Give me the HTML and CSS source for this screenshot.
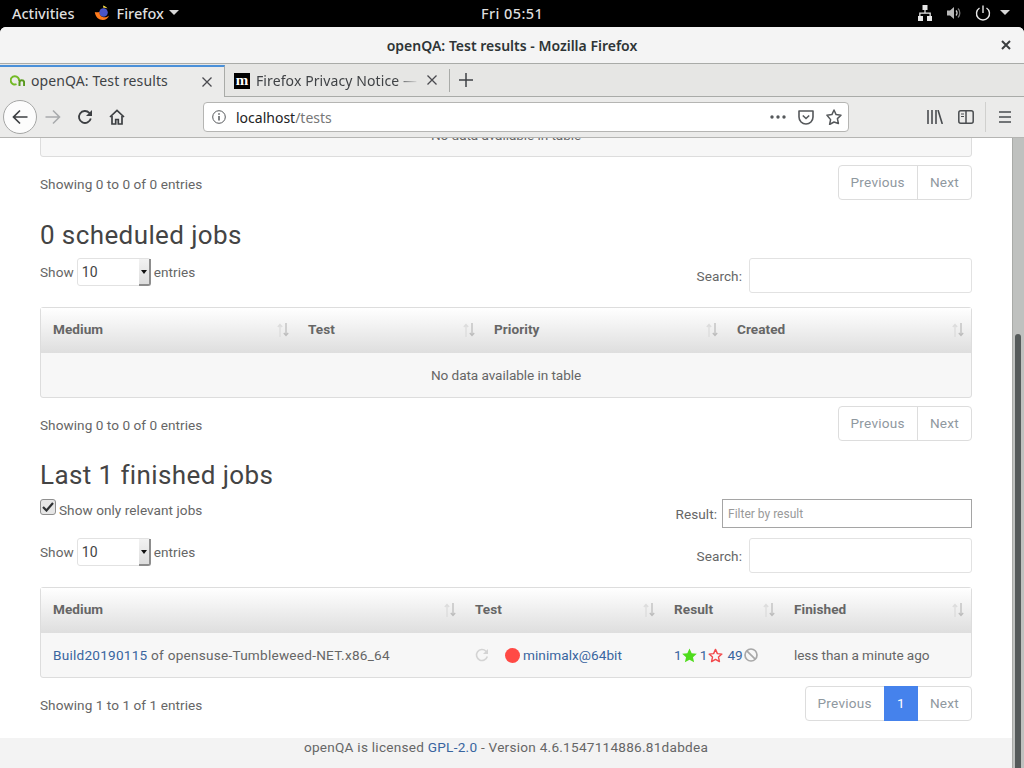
FILE: index.html
```html
<!DOCTYPE html>
<html>

<head>
    <title>openQA: Test results</title>
    <link rel="stylesheet" href="styles.css">
</head>

<body>
    <svg class="icon-defs">
        <symbol id="sort" viewBox="0 0 12 14">
            <path d="M3 14V2M.8 4L3 1.500 5.200 4" fill="none" stroke="#dcdcdc" stroke-width="1.300"/>
            <path d="M9 0v12M6.800 10L9 12.500 11.200 10" fill="none" stroke="#bdbdbd" stroke-width="1.300"/>
        </symbol>
        <symbol id="close" viewBox="0 0 10 10">
            <path d="M.5.500l9 9M9.500.500l-9 9" stroke="#4a4a4f" stroke-width="1.300"/>
        </symbol>
        <linearGradient id="fx-grad" x1="1" y1="0" x2="0" y2="1">
            <stop offset="0" stop-color="#ffd02e"/>
            <stop offset=".5" stop-color="#ff8a1c"/>
            <stop offset="1" stop-color="#e9265a"/>
        </linearGradient>
    </svg>

    <div class="topbar">
        <div class="top-left">
            <span class="activities">Activities</span>
            <span class="app-menu">
                <svg class="fx-logo" width="17" height="18" viewBox="0 0 17 18">
                    <circle cx="8.500" cy="9.500" r="8" fill="url(#fx-grad)"/>
                    <circle cx="9.500" cy="8.500" r="4.300" fill="#4a55c8"/>
                    <path d="M.8 8c.5 5 4 8 8 8 3 0 5.500-2 6.300-4.500-1.500 1.500-3.500 2.200-5.600 1.700C6.500 12.500 5 10.500 5.500 8 4 8.300 2 8.300.8 8z" fill="#ff7a1c"/>
                    <path d="M9 1.500c2 .5 3.500 1.500 4.500 3-1-.5-2.500-1-4-.5z" fill="#ffe14d"/>
                </svg>
                Firefox
                <span class="caret"></span>
            </span>
        </div>
        <div class="clock">Fri 05:51</div>
        <div class="top-right">
            <svg width="16" height="16" viewBox="0 0 16 16" fill="#e6e6e6"><path d="M5.500 0h5v5H8.600v2.400h5.200V11H15v5h-5v-5h2.500V8.700h-9V11H6v5H1v-5h1.200V7.400h5.200V5H5.500z"/></svg>
            <svg width="16" height="16" viewBox="0 0 16 16" fill="none"><path d="M1 5.500h3L8 2v12L4 10.500H1z" fill="#b8b8b8"/><path d="M10 5.500a3.500 3.500 0 0 1 0 5" stroke="#d0d0d0" stroke-width="1.300"/><path d="M12 3.500a6.500 6.500 0 0 1 0 9" stroke="#7a7a7a" stroke-width="1.300"/></svg>
            <svg width="16" height="16" viewBox="0 0 16 16" fill="none" stroke="#e6e6e6" stroke-width="1.400"><path d="M4.500 3a6.500 6.500 0 1 0 7 0"/><path d="M8 .5v7.500"/></svg>
            <span class="caret"></span>
        </div>
    </div>

    <div class="window">
        <div class="titlebar">
            <span>openQA: Test results - Mozilla Firefox</span>
            <svg class="win-close" width="10" height="10" viewBox="0 0 10 10" stroke="#3a3d3f" stroke-width="2"><path d="M1 1l8 8M9 1l-8 8"/></svg>
        </div>

        <div class="tabbar">
            <div class="tab tab-active">
                <svg class="favicon" width="15" height="16" viewBox="0 0 15 16" fill="none" stroke="#73ba25" stroke-width="2"><path d="M6.500 11.200A4.200 4.200 0 1 1 9 8"/><path d="M9.500 13V9.500a2.300 2.300 0 0 1 4.600 0V13" stroke="#5a9a1f"/></svg>
                <span class="tab-title">openQA: Test results</span>
                <svg class="tab-close" width="10" height="10"><use href="#close"/></svg>
            </div>
            <div class="tab tab-other">
                <span class="moz-icon">m</span>
                <span class="tab-title">Firefox Privacy Notice —</span>
                <svg class="tab-close" width="10" height="10"><use href="#close"/></svg>
            </div>
            <svg class="new-tab" width="14" height="14" viewBox="0 0 14 14" stroke="#3f4145" stroke-width="1.500"><path d="M7 0v14M0 7h14"/></svg>
        </div>

        <div class="navbar">
            <div class="back-btn">
                <svg width="16" height="16" viewBox="0 0 16 16" fill="none" stroke="#3c3f42" stroke-width="1.700"><path d="M15.500 8H1.500M8 1.500L1.500 8 8 14.500"/></svg>
            </div>
            <svg class="nav-forward" width="16" height="16" viewBox="0 0 16 16" fill="none" stroke="#a9abad" stroke-width="1.600"><path d="M.5 8h14M8 1.500L14.500 8 8 14.500"/></svg>
            <svg class="nav-reload" width="16" height="16" viewBox="0 0 16 16" fill="none" stroke="#3c3f42" stroke-width="1.800"><path d="M13.800 9.500A6 6 0 1 1 12.300 3.800L14 6"/><path d="M15 1v6H9z" fill="#3c3f42" stroke="none"/></svg>
            <svg class="nav-home" width="16" height="16" viewBox="0 0 16 16" fill="none" stroke="#3c3f42" stroke-width="1.700"><path d="M1 8l7-6.500L15 8"/><path d="M3 7v8h3.700v-4.500h2.600V15H13V7"/></svg>
            <div class="urlbar">
                <svg class="url-info" width="14" height="14" viewBox="0 0 14 14" fill="none" stroke="#55585b"><circle cx="7" cy="7" r="6.300"/><path d="M7 6v4.500" stroke-width="1.500"/><path d="M7 3.200v1.500" stroke-width="1.500"/></svg>
                <span class="url-text">localhost<span class="url-path">/tests</span></span>
                <svg class="url-dots" width="16" height="4" viewBox="0 0 16 4" fill="#55585b"><circle cx="2" cy="2" r="1.700"/><circle cx="8" cy="2" r="1.700"/><circle cx="14" cy="2" r="1.700"/></svg>
                <svg class="url-pocket" width="16" height="15" viewBox="0 0 16 15" fill="none" stroke="#55585b" stroke-width="1.600"><path d="M1 1h14v6a7 7 0 0 1-14 0z" stroke-linejoin="round"/><path d="M4.800 5.500L8 8.500l3.200-3"/></svg>
                <svg class="url-star" width="16" height="16" viewBox="0 0 16 16" fill="none" stroke="#55585b" stroke-width="1.500" stroke-linejoin="round"><path d="M8 1l2.100 4.600 4.900.6-3.600 3.400 1 4.900L8 13l-4.400 2.500 1-4.900L1 6.200l4.900-.6z"/></svg>
            </div>
            <div class="nav-right">
                <svg width="16" height="14" viewBox="0 0 16 14" stroke="#4a4d50" stroke-width="1.600"><path d="M1 0v14M5 0v14M9 0v14M11 0l4.300 14"/></svg>
                <svg class="nav-sidebar" width="16" height="14" viewBox="0 0 16 14" fill="none" stroke="#4a4d50" stroke-width="1.500"><rect x=".8" y=".8" width="14.400" height="12.400" rx="2"/><path d="M8 1v12"/><path d="M3 4h3M3 6.500h3" stroke-width="1.200"/></svg>
                <span class="nav-sep"></span>
                <svg width="12" height="12" viewBox="0 0 12 12" stroke="#4a4d50" stroke-width="1.600"><path d="M0 1h12M0 6h12M0 11h12"/></svg>
            </div>
        </div>

        <div class="viewport">
            <div class="content">
                <div class="page">
                    <div class="clipped-panel">No data available in table</div>
                    <div class="table-footer">
                        <span>Showing 0 to 0 of 0 entries</span>
                        <div class="pager">
                            <span class="page-btn">Previous</span>
                            <span class="page-btn">Next</span>
                        </div>
                    </div>

                    <h2>0 scheduled jobs</h2>
                    <div class="table-controls">
                        <div class="show-entries">
                            Show
                            <span class="fake-select"><span>10</span><span class="select-arrow"></span></span>
                            entries
                        </div>
                        <label class="search-box">Search: <input type="text"></label>
                    </div>
                    <table class="jobs-table">
                        <thead>
                            <tr>
                                <th class="col-a">Medium<svg class="sort" width="12" height="14"><use href="#sort"/></svg></th>
                                <th class="col-b">Test<svg class="sort" width="12" height="14"><use href="#sort"/></svg></th>
                                <th class="col-c">Priority<svg class="sort" width="12" height="14"><use href="#sort"/></svg></th>
                                <th>Created<svg class="sort" width="12" height="14"><use href="#sort"/></svg></th>
                            </tr>
                        </thead>
                        <tbody>
                            <tr><td colspan="4" class="empty-cell">No data available in table</td></tr>
                        </tbody>
                    </table>
                    <div class="table-footer">
                        <span>Showing 0 to 0 of 0 entries</span>
                        <div class="pager">
                            <span class="page-btn">Previous</span>
                            <span class="page-btn">Next</span>
                        </div>
                    </div>

                    <h2 class="heading-last">Last 1 finished jobs</h2>
                    <div class="filter-row">
                        <label class="relevant">
                            <span class="checkbox"><svg width="12" height="10" viewBox="0 0 12 10" fill="none" stroke="#2e3133" stroke-width="2.200"><path d="M1 5l3.500 3.500L11 1"/></svg></span>
                            <span class="relevant-text">Show only relevant jobs</span>
                        </label>
                        <label class="result-filter">Result: <input type="text" placeholder="Filter by result"></label>
                    </div>
                    <div class="table-controls controls-tight">
                        <div class="show-entries">
                            Show
                            <span class="fake-select"><span>10</span><span class="select-arrow"></span></span>
                            entries
                        </div>
                        <label class="search-box">Search: <input type="text"></label>
                    </div>
                    <table class="jobs-table">
                        <thead>
                            <tr>
                                <th class="col-d">Medium<svg class="sort" width="12" height="14"><use href="#sort"/></svg></th>
                                <th class="col-e">Test<svg class="sort" width="12" height="14"><use href="#sort"/></svg></th>
                                <th class="col-f">Result<svg class="sort" width="12" height="14"><use href="#sort"/></svg></th>
                                <th>Finished<svg class="sort" width="12" height="14"><use href="#sort"/></svg></th>
                            </tr>
                        </thead>
                        <tbody>
                            <tr>
                                <td class="job-name"><a href="#">Build20190115</a> of opensuse-Tumbleweed-NET.x86_64</td>
                                <td>
                                    <div class="test-cell">
                                        <svg class="restart" width="14" height="14" viewBox="0 0 14 14" fill="none" stroke="#d4d4d4" stroke-width="1.600"><path d="M12.300 8.500A5.500 5.500 0 1 1 11 3.200l1.200 1.500"/><path d="M13 1v5H8z" fill="#d4d4d4" stroke="none"/></svg>
                                        <span class="status-dot"></span>
                                        <a href="#">minimalx@64bit</a>
                                    </div>
                                </td>
                                <td>
                                    <div class="result-cell">
                                        <a href="#">1</a>
                                        <svg width="15" height="15" viewBox="0 0 16 16" fill="#4fdc1c"><path d="M8 .5l2.300 5 5.500.6-4.100 3.700 1.200 5.400L8 12.500l-4.900 2.700 1.200-5.400L.2 6.100l5.500-.6z"/></svg>
                                        <a href="#" class="res-next">1</a>
                                        <svg class="res-outline" width="15" height="15" viewBox="0 0 16 16" fill="none" stroke="#f2474a" stroke-width="1.500" stroke-linejoin="round"><path d="M8 1.500l2 4.500 4.800.5-3.600 3.200 1 4.800L8 12.100l-4.200 2.400 1-4.800L1.200 6.500 6 6z"/></svg>
                                        <a href="#" class="res-skipped">49</a>
                                        <svg width="14" height="14" viewBox="0 0 14 14" fill="none" stroke="#a8a8a8" stroke-width="1.700"><circle cx="7" cy="7" r="6"/><path d="M2.800 2.800l8.400 8.400"/></svg>
                                    </div>
                                </td>
                                <td class="finished-cell">less than a minute ago</td>
                            </tr>
                        </tbody>
                    </table>
                    <div class="table-footer">
                        <span>Showing 1 to 1 of 1 entries</span>
                        <div class="pager">
                            <span class="page-btn">Previous</span>
                            <span class="page-btn page-current">1</span>
                            <span class="page-btn page-last">Next</span>
                        </div>
                    </div>
                </div>
                <div class="footer">openQA is licensed <a href="#">GPL-2.0</a> - Version 4.6.1547114886.81dabdea</div>
            </div>
            <div class="scrollbar"><div class="thumb"></div></div>
        </div>
    </div>
</body>
</html>
```

FILE: styles.css
```css
* {
    box-sizing: border-box;
}

html, body {
    margin: 0;
    height: 100%;
    overflow: hidden;
}

body {
    background: #000;
    font-family: "Roboto", sans-serif;
    display: flex;
    flex-direction: column;
    width: 1024px;
    height: 768px;
}

.icon-defs {
    display: none;
}

/* gnome top bar */
.topbar {
    height: 27px;
    flex: none;
    background: #000;
    color: #dedede;
    font-family: "Noto Sans", sans-serif;
    font-size: 14.5px;
    font-weight: 500;
    display: flex;
    align-items: center;
    justify-content: space-between;
    position: relative;
    padding-bottom: 2px;
}

.top-left {
    display: flex;
    align-items: center;
}

.activities {
    margin-left: 12px;
}

.app-menu {
    margin-left: 20px;
    display: flex;
    align-items: center;
}

.fx-logo {
    margin-right: 5px;
}

.caret {
    display: inline-block;
    width: 0;
    height: 0;
    border-left: 5px solid transparent;
    border-right: 5px solid transparent;
    border-top: 5px solid #d8d8d8;
    margin-left: 5px;
}

.clock {
    position: absolute;
    left: 481px;
    letter-spacing: .4px;
}

.top-right {
    display: flex;
    align-items: center;
    gap: 13px;
    padding-right: 14px;
}

.top-right .caret {
    margin-left: -4px;
}

.window {
    flex: 1;
    min-height: 0;
    display: flex;
    flex-direction: column;
    background: #fff;
    border-radius: 6px 6px 0 0;
}

.titlebar {
    height: 37px;
    flex: none;
    background: #f4f4f4;
    border-radius: 6px 6px 0 0;
    border-bottom: 1px solid #a9aba8;
    font-family: "Noto Sans", sans-serif;
    font-size: 14px;
    font-weight: 600;
    color: #2e3436;
    display: flex;
    align-items: center;
    justify-content: center;
    position: relative;
}

.win-close {
    position: absolute;
    right: 13px;
    top: 13px;
}

/* firefox chrome */
.tabbar {
    height: 33px;
    flex: none;
    background: #e6e6e4;
    border-bottom: 1px solid #a9aba8;
    display: flex;
    align-items: stretch;
    font-family: "Noto Sans", sans-serif;
    font-size: 14px;
    color: #404346;
    letter-spacing: .1px;
}

.tab {
    display: flex;
    align-items: center;
    position: relative;
}

.tab-active {
    width: 225px;
    background: #ebebea;
    border-top: 2px solid #4a90d9;
    margin: 1px 0 -1px;
    border-right: 1px solid #a9aba8;
    padding: 0 0 3px 10px;
}

.tab-other {
    width: 225px;
    padding-left: 9px;
    border-right: 1px solid #a9aba8;
    margin: 5px 0 4px;
}

.tab-other .tab-title {
    -webkit-mask-image: linear-gradient(to right, #000 140px, transparent 163px);
    mask-image: linear-gradient(to right, #000 140px, transparent 163px);
}

.favicon {
    flex: none;
    margin-right: 6px;
}

.tab-title {
    white-space: nowrap;
}

.tab-close {
    position: absolute;
    right: 12px;
    top: 10px;
}

.tab-other .tab-close {
    top: 6px;
}

.moz-icon {
    width: 16px;
    height: 16px;
    background: #000;
    color: #fff;
    font-family: "Liberation Serif", serif;
    font-weight: bold;
    font-size: 15px;
    line-height: 14px;
    text-align: center;
    margin-right: 6px;
    flex: none;
}

.new-tab {
    margin: 9px 0 0 9px;
}

.navbar {
    height: 41px;
    flex: none;
    background: #ebebea;
    border-bottom: 1px solid #b5b5b3;
    display: flex;
    align-items: center;
    padding-left: 3px;
}

.back-btn {
    width: 34px;
    height: 34px;
    border-radius: 50%;
    background: #fcfcfc;
    border: 1px solid #a5a6a5;
    display: flex;
    align-items: center;
    justify-content: center;
}

.nav-forward {
    margin-left: 8px;
}

.nav-reload {
    margin-left: 16px;
}

.nav-home {
    margin-left: 16px;
}

.urlbar {
    width: 646px;
    height: 30px;
    margin-left: 78px;
    background: #fff;
    border: 1px solid #b5b5b3;
    border-radius: 4px;
    display: flex;
    align-items: center;
    font-family: "Noto Sans", sans-serif;
    font-size: 14px;
    color: #222;
    padding: 0 6px 0 8px;
}

.url-text {
    margin-left: 10px;
    flex: 1;
}

.url-path {
    color: #777;
}

.url-pocket {
    margin-left: 12px;
}

.url-star {
    margin-left: 12px;
}

.nav-right {
    display: flex;
    align-items: center;
    margin-left: 78px;
}

.nav-sidebar {
    margin-left: 15px;
}

.nav-sep {
    width: 1px;
    height: 30px;
    background: #d0d0ce;
    margin: 0 13px 0 11px;
}

/* page content */
.viewport {
    flex: 1;
    min-height: 0;
    display: flex;
    background: #fff;
    font-size: 13.6px;
    color: #666;
    letter-spacing: .05px;
}

.content {
    flex: 1;
    min-width: 0;
    overflow: hidden;
}

.page {
    padding: 0 40px;
    margin-top: -62px;
}

.clipped-panel {
    height: 81px;
    background: #f7f7f7;
    border: 1px solid #ddd;
    border-radius: 0 0 3px 3px;
    padding-top: 50px;
    text-align: center;
    letter-spacing: -.07px;
}

.table-footer {
    display: flex;
    justify-content: space-between;
    align-items: center;
    height: 35px;
    margin-top: 8px;
}

.table-footer > span {
    padding-top: 3px;
}

.pager {
    display: flex;
    height: 35px;
    border: 1px solid #ddd;
    border-radius: 4px;
    color: #8f98a0;
    letter-spacing: .25px;
}

.page-btn {
    padding: 0 12px;
    line-height: 32px;
    border-left: 1px solid #ddd;
}

.page-btn:first-child {
    border-left: none;
}

.page-current {
    background: #4582ec;
    color: #fff;
    border-left: none;
    margin: -1px 0;
    padding: 1px 0;
    width: 34px;
    text-align: center;
}

.page-last {
    border-left: none;
}

h2 {
    margin: 20px 0 0;
    font-size: 26px;
    font-weight: 400;
    color: #444;
    line-height: 31px;
    letter-spacing: .4px;
}

.heading-last {
    margin-top: 19px;
}

.table-controls {
    display: flex;
    justify-content: space-between;
    align-items: flex-start;
    margin-top: 7px;
    height: 49px;
}

.controls-tight {
    margin-top: 0;
}

.show-entries {
    display: flex;
    align-items: center;
    height: 28px;
    gap: 3px;
}

.fake-select {
    width: 74px;
    height: 28px;
    border: 1px solid #e2e2e2;
    border-radius: 3px;
    display: flex;
    justify-content: space-between;
    font-size: 14px;
    color: #444;
    line-height: 26px;
    padding-left: 4px;
}

.select-arrow {
    width: 12px;
    margin: 0 -1px -1px 0;
    background: linear-gradient(#f2f2f2, #ddd);
    border-right: 2px solid #8d8d8d;
    border-bottom: 2px solid #8d8d8d;
    border-radius: 0 0 3px 0;
    position: relative;
}

.select-arrow::after {
    content: "";
    position: absolute;
    left: 2px;
    top: 11px;
    border-left: 3px solid transparent;
    border-right: 3px solid transparent;
    border-top: 4px solid #111;
}

.search-box {
    display: flex;
    align-items: center;
    gap: 7px;
}

.search-box input {
    width: 223px;
    height: 35px;
    border: 1px solid #e2e2e2;
    border-radius: 3px;
    background: #fff;
}

.jobs-table {
    width: 100%;
    border-collapse: separate;
    border-spacing: 0;
    table-layout: fixed;
    border: 1px solid #ddd;
    border-radius: 3px;
    background: #f7f7f7;
}

.jobs-table th {
    height: 45px;
    padding: 0 12px 4px;
    text-align: left;
    font-weight: 700;
    color: #666;
    background: linear-gradient(#fff, #dedede);
    position: relative;
}

.jobs-table td {
    height: 44px;
    padding: 0 12px;
    white-space: nowrap;
}

.sort {
    position: absolute;
    right: 7px;
    top: 15px;
}

.col-a { width: 255px; }
.col-b { width: 186px; }
.col-c { width: 243px; }
.col-d { width: 422px; }
.col-e { width: 199px; }
.col-f { width: 120px; }

.jobs-table .empty-cell,
.jobs-table .finished-cell {
    letter-spacing: -.07px;
}

.empty-cell {
    text-align: center;
}

.job-name {
    letter-spacing: .24px;
}

a {
    color: #39659f;
    text-decoration: none;
}

.test-cell {
    display: flex;
    align-items: center;
}

.restart {
    margin-right: 16px;
}

.status-dot {
    width: 15px;
    height: 15px;
    border-radius: 50%;
    background: #ff4a45;
    margin-right: 3px;
}

.result-cell {
    display: flex;
    align-items: center;
}

.res-next {
    margin-left: 3px;
}

.res-outline {
    margin-left: 1px;
}

.res-skipped {
    margin: 0 1px 0 4px;
}

.filter-row {
    display: flex;
    justify-content: space-between;
    align-items: flex-start;
    margin-top: 8px;
    height: 39px;
}

.relevant {
    display: flex;
    align-items: flex-start;
    gap: 3px;
}

.relevant-text {
    padding-top: 3px;
}

.checkbox {
    width: 16px;
    height: 16px;
    border: 1px solid #8f8f8f;
    border-radius: 3px;
    background: #e6e6e6;
    display: flex;
    align-items: center;
    justify-content: center;
}

.result-filter {
    display: flex;
    align-items: center;
    gap: 5px;
}

.result-filter input {
    width: 250px;
    height: 29px;
    border: 1px solid #a5a5a5;
    font-family: "Roboto", sans-serif;
    font-size: 12px;
    padding: 0 5px;
}

.result-filter input::placeholder {
    color: #999;
}

.footer {
    margin-top: 17px;
    height: 30px;
    background: #f3f3f3;
    text-align: center;
    line-height: 18px;
    letter-spacing: .25px;
}

.scrollbar {
    flex: none;
    width: 12px;
    background: #bfc1bf;
    border-left: 1px solid #a9aba8;
    padding: 0 3px 0 2px;
}

.thumb {
    margin-top: 196px;
    height: 440px;
    background: #555a5a;
    border-radius: 4px 4px 0 0;
}
```
